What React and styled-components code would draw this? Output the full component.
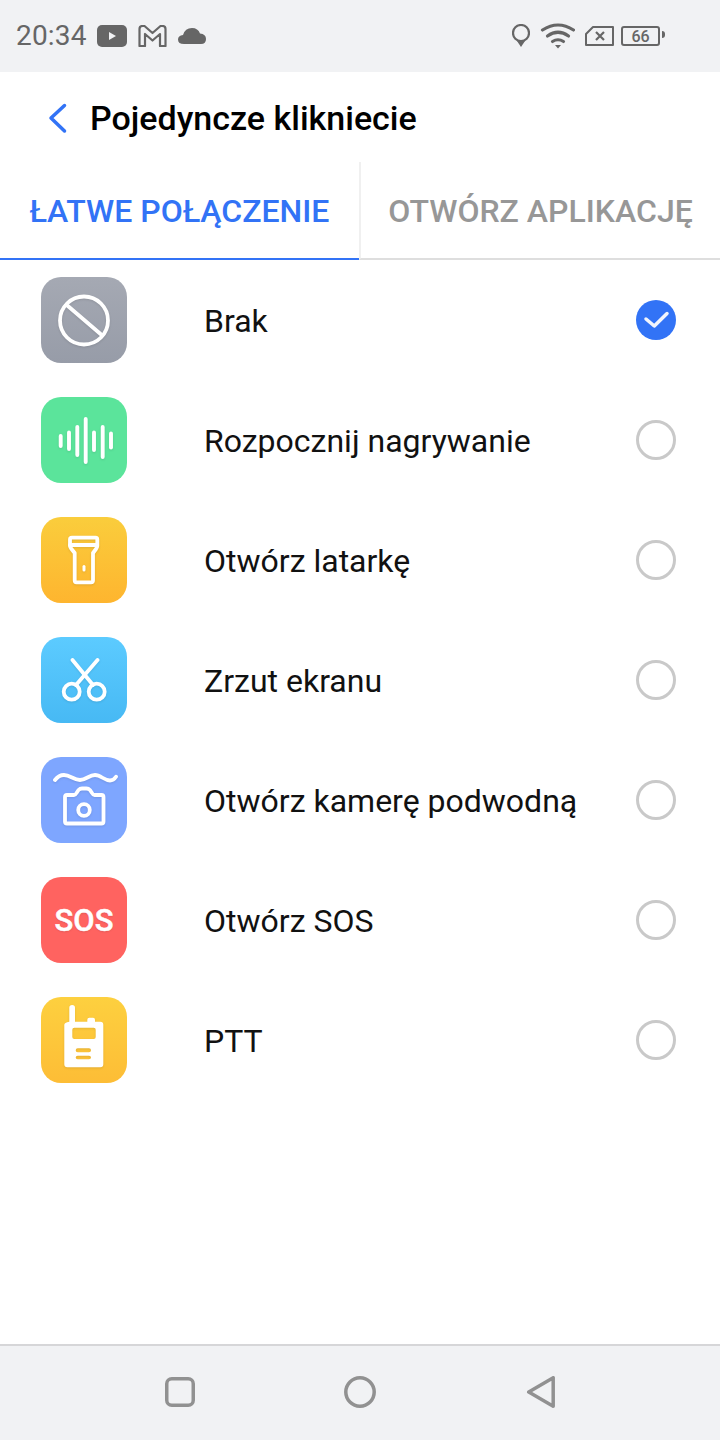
import React from 'react';
import styled, { createGlobalStyle } from 'styled-components';

const Global = createGlobalStyle`
  html, body {
    margin: 0;
    padding: 0;
    background: #fff;
  }
  body {
    font-family: Roboto, "Noto Sans", sans-serif;
  }
`;

const Page = styled.div`
  width: 720px;
  height: 1440px;
  display: flex;
  flex-direction: column;
  overflow: hidden;
  background: #fff;
`;

const StatusBar = styled.div`
  height: 72px;
  flex: none;
  display: flex;
  align-items: center;
  justify-content: space-between;
  padding: 0 60px 0 16px;
  background: #f1f2f4;
  color: #666;
`;

const StatusGroup = styled.div`
  display: flex;
  align-items: center;
  gap: ${(p) => p.$gap || 8}px;
`;

const Clock = styled.span`
  font-size: 28px;
  line-height: 72px;
  letter-spacing: 0.2px;
  margin-right: -1px;
`;

const BatteryBox = styled.div`
  position: relative;
  width: 39px;
  height: 20px;
  margin-left: -3px;
  border: 2px solid #666;
  border-radius: 3px;
  box-sizing: border-box;
  font-size: 16px;
  font-weight: 500;
  line-height: 17px;
  text-align: center;
  color: #666;

  &::after {
    content: '';
    position: absolute;
    right: -7px;
    top: 3px;
    width: 3px;
    height: 7px;
    background: #666;
    border-radius: 0 3px 3px 0;
  }
`;

const TitleBar = styled.header`
  height: 90px;
  flex: none;
  display: flex;
  align-items: center;
  padding: 2px 0 0 46px;
  box-sizing: border-box;
  gap: 20px;
`;

const BackButton = styled.button`
  border: 0;
  padding: 0;
  margin-top: -1px;
  background: none;
  display: flex;
`;

const Title = styled.h1`
  margin: 0;
  font-size: 34px;
  font-weight: 500;
  color: #000;
`;

const Tabs = styled.nav`
  height: 98px;
  flex: none;
  display: flex;
`;

const Tab = styled.div`
  flex: none;
  width: ${(p) => p.$width}px;
  box-sizing: border-box;
  display: flex;
  align-items: center;
  justify-content: center;
  padding-top: 1px;
  font-size: 32px;
  font-weight: 500;
  white-space: nowrap;
  color: ${(p) => (p.$active ? '#3273f6' : '#979797')};
  border-bottom: 2px solid ${(p) => (p.$active ? '#3273f6' : '#dedede')};
  border-left: ${(p) => (p.$active ? '0' : '2px solid #f0f0f0')};
`;

const List = styled.ul`
  flex: 1;
  margin: 0;
  padding: 0;
  list-style: none;
`;

const Row = styled.li`
  height: 120px;
  display: flex;
  align-items: center;
  padding: 0 44px 0 41px;
`;

const Tile = styled.div`
  width: 86px;
  height: 86px;
  flex: none;
  border-radius: 20px;
  display: flex;
  align-items: center;
  justify-content: center;
  background: linear-gradient(${(p) => p.$from}, ${(p) => p.$to});
  color: #fff;

  svg {
    filter: drop-shadow(0 1px 1px rgba(0, 0, 0, 0.1));
  }
`;

const SosMark = styled.span`
  font-family: Roboto, sans-serif;
  font-size: 31px;
  font-weight: 500;
  -webkit-text-stroke: 0.5px #fff;
  text-shadow: 0 1px 2px rgba(0, 0, 0, 0.12);
`;

const Label = styled.span`
  flex: 1;
  margin-left: 77px;
  padding-top: 1px;
  font-size: 32px;
  color: #111;
`;

const Radio = styled.div`
  width: 40px;
  height: 40px;
  flex: none;
  box-sizing: border-box;
  border-radius: 50%;
  display: flex;
  background: ${(p) => (p.$on ? '#3273f6' : 'transparent')};
  border: ${(p) => (p.$on ? '0' : '3px solid #c9c9c9')};
`;

const NavBar = styled.footer`
  height: 96px;
  flex: none;
  display: flex;
  align-items: center;
  justify-content: center;
  gap: 148px;
  padding-bottom: 2px;
  box-sizing: border-box;
  background: #f1f2f4;
  border-top: 2px solid #d6d6d8;
`;

const Glyph = ({ children }) => (
  <svg
    width="86"
    height="86"
    viewBox="0 0 86 86"
    fill="none"
    stroke="#fff"
    strokeWidth="3.800"
    strokeLinecap="round"
    strokeLinejoin="round"
  >
    {children}
  </svg>
);

const icons = {
  none: (
    <Glyph>
      <circle cx="43" cy="43.500" r="24" />
      <path d="M25.700 28 L60.700 58" />
    </Glyph>
  ),
  wave: (
    <Glyph>
      <g strokeWidth="3.900">
        <path d="M19.700 39 V49" />
        <path d="M28 35.500 V52" />
        <path d="M36.300 30 V58" />
        <path d="M44.700 22 V65" />
        <path d="M53 35.500 V53" />
        <path d="M61.700 30 V60" />
        <path d="M70 36.500 V50.500" />
      </g>
    </Glyph>
  ),
  torch: (
    <Glyph>
      <path d="M31 20.700 H54.500 Q56.300 20.700 56.300 22.500 V29 Q56.300 30 55 32 L52 36 V63.500 Q52 65.300 50 65.300 H35.500 Q33.700 65.300 33.700 63.500 V36 L30.500 32 Q29 30 29 29 V22.500 Q29 20.700 31 20.700 Z" />
      <path d="M29 28 H56" />
      <path d="M43 49.500 V53" strokeWidth="3" />
    </Glyph>
  ),
  scissors: (
    <Glyph>
      <path d="M31.500 23 L52 48" />
      <path d="M56.500 23 L35 48" />
      <circle cx="30.700" cy="54.700" r="8" />
      <circle cx="55.700" cy="54.700" r="8" />
    </Glyph>
  ),
  camera: (
    <Glyph>
      <path d="M14 23 C17 19 20 18 23 18 C29 18 33 23 39 23 C45 23 48 18 54 18 C60 18 63 23.500 69 23.500 C71.500 23.500 73.500 22 75 19.700" />
      <path d="M26 38 H33 Q34.500 38 35.500 36 L37.500 33 Q39 31.500 41 31.500 H45.500 Q47.500 31.500 49 33 L51 36 Q52 38 53.500 38 H60.500 Q62.500 38 62.500 40 V64.500 Q62.500 66.500 60.500 66.500 H26 Q24 66.500 24 64.500 V40 Q24 38 26 38 Z" />
      <circle cx="43" cy="53" r="5.800" />
    </Glyph>
  ),
  ptt: (
    <svg width="86" height="86" viewBox="0 0 86 86">
      <path
        fill="#fff"
        fillRule="evenodd"
        d="M31.200 8 Q34 8 34 10.800 V24.700 H46.300 V22.700 Q46.300 20.700 48.300 20.700 H52 Q54 20.700 54 22.700 V24.700 H59.300 Q62.300 24.700 62.300 27.700 V67.300 Q62.300 70.300 59.300 70.300 H26.300 Q23.300 70.300 23.300 67.300 V27.700 Q23.300 25.500 28.300 24.700 V10.800 Q28.300 8 31.200 8 Z M33.300 30.700 Q31.300 30.700 31.300 32.700 V40 Q31.300 42 33.300 42 H52.700 Q54.700 42 54.700 40 V32.700 Q54.700 30.700 52.700 30.700 Z M36.700 51.300 Q34.700 51.300 34.700 53.300 Q34.700 55.300 36.700 55.300 H48 Q50 55.300 50 53.300 Q50 51.300 48 51.300 Z M36.700 58.700 Q34.700 58.700 34.700 60.500 Q34.700 62.300 36.700 62.300 H48 Q50 62.300 50 60.500 Q50 58.700 48 58.700 Z"
      />
    </svg>
  ),
};

const actions = [
  { label: 'Brak', from: '#a5a9b3', to: '#979ca8', icon: icons.none, on: true },
  { label: 'Rozpocznij nagrywanie', from: '#5be49b', to: '#5be49b', icon: icons.wave },
  { label: 'Otwórz latarkę', from: '#facd3c', to: '#feb52f', icon: icons.torch },
  { label: 'Zrzut ekranu', from: '#5ccbff', to: '#47b9f4', icon: icons.scissors },
  { label: 'Otwórz kamerę podwodną', from: '#7ea6ff', to: '#7ea6ff', icon: icons.camera },
  { label: 'Otwórz SOS', from: '#ff6360', to: '#ff6360', icon: <SosMark>SOS</SosMark> },
  { label: 'PTT', from: '#fdd03f', to: '#fdbd36', icon: icons.ptt },
];

function App() {
  return (
    <Page>
      <Global />
      <StatusBar>
        <StatusGroup $gap={11}>
          <Clock>20:34</Clock>
          <svg width="30" height="22" viewBox="0 0 30 22">
            <rect width="30" height="22" rx="5" fill="#666" />
            <path d="M12 7 L19 11 L12 15 Z" fill="#f1f2f4" />
          </svg>
          <svg width="29" height="22" viewBox="0 0 29 22" fill="none" stroke="#666" strokeWidth="2.200" strokeLinejoin="round">
            <path d="M1.500 4 Q1.500 1 4.500 1 H6.500 L14.500 8 L22.500 1 H24.500 Q27.500 1 27.500 4 V21 H22 V9 L14.500 15.500 L7 9 V21 H1.500 Z" />
          </svg>
          <svg width="28" height="18" viewBox="0 0 28 18">
            <path
              fill="#666"
              d="M6 17 Q0 17 0 12.500 Q0 8.500 5 8 Q7 1 14 1 Q20 1 22 6.500 Q28 7 28 12 Q28 17 23 17 Z"
            />
          </svg>
        </StatusGroup>
        <StatusGroup $gap={10}>
          <svg width="18" height="24" viewBox="0 0 18 24" fill="none" stroke="#666" strokeWidth="2.200">
            <circle cx="9" cy="9" r="8" />
            <path d="M5 17 L9 23 L13 17 Z" fill="#666" stroke="none" />
          </svg>
          <svg width="35" height="26" viewBox="-1 0 35 26" fill="none" stroke="#666" strokeWidth="3.200" strokeLinecap="round">
            <path d="M1.500 7 Q17 -3 32.500 7" />
            <path d="M6.500 13 Q17 5.500 27.500 13" />
            <path d="M11.500 18.500 Q17 15 22.500 18.500" />
            <path d="M14 22 L17 25.500 L20 22 Z" fill="#666" stroke="none" />
          </svg>
          <svg width="29" height="20" viewBox="0 0 29 20" fill="none" stroke="#666" strokeWidth="2">
            <path d="M1 8 L8 1 H28 V19 H1 Z" strokeLinejoin="round" />
            <path d="M11 6 L19 14 M19 6 L11 14" strokeWidth="2.200" />
          </svg>
          <BatteryBox>66</BatteryBox>
        </StatusGroup>
      </StatusBar>

      <TitleBar>
        <BackButton aria-label="Wstecz">
          <svg width="24" height="32" viewBox="0 0 24 32" fill="none" stroke="#3273f6" strokeWidth="3.500" strokeLinecap="round" strokeLinejoin="round">
            <path d="M18.500 3.500 L5 16 L18.500 29" />
          </svg>
        </BackButton>
        <Title>Pojedyncze klikniecie</Title>
      </TitleBar>

      <Tabs>
        <Tab $active $width={359}>ŁATWE POŁĄCZENIE</Tab>
        <Tab $width={361}>OTWÓRZ APLIKACJĘ</Tab>
      </Tabs>

      <List>
        {actions.map((action) => (
          <Row key={action.label}>
            <Tile $from={action.from} $to={action.to}>{action.icon}</Tile>
            <Label>{action.label}</Label>
            <Radio $on={action.on}>
              {action.on && (
                <svg width="40" height="40" viewBox="0 0 40 40" fill="none" stroke="#f2f5fc" strokeWidth="3.500" strokeLinecap="round" strokeLinejoin="round">
                  <path d="M10 19 L18.300 26 L31 13.500" />
                </svg>
              )}
            </Radio>
          </Row>
        ))}
      </List>

      <NavBar>
        <svg width="32" height="32" viewBox="0 0 32 32" fill="none" stroke="#919191" strokeWidth="3.500">
          <rect x="2.750" y="2.750" width="26.500" height="26.500" rx="5" />
        </svg>
        <svg width="32" height="32" viewBox="0 0 32 32" fill="none" stroke="#919191" strokeWidth="3.500">
          <circle cx="16" cy="16" r="14.200" />
        </svg>
        <svg width="32" height="32" viewBox="0 0 32 32" fill="none" stroke="#919191" strokeWidth="3.500" strokeLinejoin="round">
          <path d="M29.200 1.750 V30.250 L4.750 16 Z" />
        </svg>
      </NavBar>
    </Page>
  );
}

export default App;
